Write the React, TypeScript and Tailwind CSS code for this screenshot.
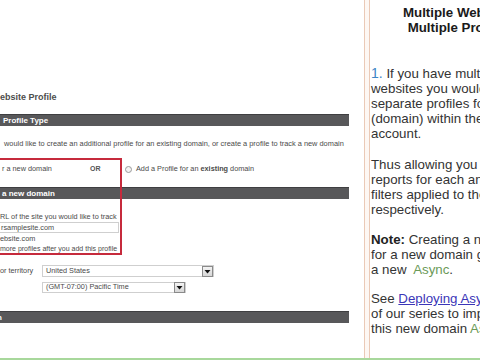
import React from "react";

function DropBtn() {
  return (
    <div className="w-[11px] h-[11px] border border-[#8a8a8a] bg-gradient-to-b from-[#f4f4f4] to-[#d6d6d6] flex items-center justify-center shrink-0">
      <svg width="7" height="5" viewBox="0 0 7 5">
        <path d="M0.5 1 L6.5 1 L3.5 4.5 Z" fill="#111" />
      </svg>
    </div>
  );
}

export default function App() {
  return (
    <div className="w-[480px] h-[360px] overflow-hidden bg-white flex flex-col font-['Liberation_Sans',Arial,sans-serif]">
      <div className="flex flex-1 min-h-0">
        {/* Left: form */}
        <div className="w-[364px] shrink-0 relative flex flex-col text-[#4a4a4a] overflow-hidden">
          <div className="mt-[91px] h-[12px] leading-[12px] text-[9px] font-bold text-[#4d4d4d] whitespace-nowrap">ebsite Profile</div>
          <div className="mt-[11px] w-[349px] h-[12px] bg-[#58585a] border-t border-[#3f3f41] text-white font-bold text-[8px] leading-[11px] pl-[3px] whitespace-nowrap">Profile Type</div>
          <div className="mt-[13px] h-[10px] leading-[10px] text-[7.4px] pl-[4px] whitespace-nowrap">would like to create an additional profile for an existing domain, or create a profile to track a new domain</div>
          <div className="mt-[15px] h-[10px] flex items-center text-[7.3px] whitespace-nowrap">
            <span className="pl-[2px] w-[90px]">r a new domain</span>
            <span className="w-[35px] text-[7px] font-bold text-[#555]">OR</span>
            <span className="w-[7px] h-[7px] rounded-full border border-[#9a9a9a] bg-[#f3f3f3]"></span>
            <span className="ml-[4px]">Add a Profile for an <b>existing</b> domain</span>
          </div>
          <div className="mt-[13px] w-[349px] h-[12px] bg-[#58585a] border-t border-[#3f3f41] text-white font-bold text-[8px] leading-[11px] pl-[2px] whitespace-nowrap">a new domain</div>
          <div className="mt-[13px] h-[10px] leading-[10px] text-[7.3px] whitespace-nowrap">RL of the site you would like to track</div>
          <div className="ml-[-2px] w-[121px] h-[11px] border border-[#cfcfcf] text-[7.3px] leading-[9px] pl-[2px] whitespace-nowrap">rsamplesite.com</div>
          <div className="mt-[1px] h-[10px] leading-[10px] text-[7.3px] whitespace-nowrap">ebsite.com</div>
          <div className="h-[10px] leading-[10px] text-[7px] whitespace-nowrap">more profiles after you add this profile</div>
          <div className="mt-[11px] h-[12px] flex items-center text-[7.3px] whitespace-nowrap">
            <span className="w-[42px]">or territory</span>
            <div className="w-[172px] h-[12px] border border-[#cfcfcf] flex items-center justify-between">
              <span className="pl-[3px]">United States</span>
              <DropBtn />
            </div>
          </div>
          <div className="mt-[5px] ml-[42px] w-[144px] h-[11px] border border-[#cfcfcf] flex items-center justify-between text-[7.3px] whitespace-nowrap">
            <span className="pl-[3px]">(GMT-07:00) Pacific Time</span>
            <DropBtn />
          </div>
          <div className="mt-[18px] w-[349px] h-[12px] bg-[#58585a] border-t border-[#3f3f41] text-white font-bold text-[8px] leading-[11px] whitespace-nowrap">
            <span className="ml-[-3px]">n</span>
          </div>
          {/* red annotation box */}
          <div className="absolute left-[-4px] top-[158px] w-[126px] h-[97px] border-2 border-[#c62a3c]"></div>
        </div>

        {/* Divider */}
        <div className="w-[6px] shrink-0 border-l border-r border-[#eac9b6] bg-[#fdf7f3]"></div>

        {/* Right: explanation */}
        <div className="flex-1 overflow-hidden pl-[1px]">
          <div className="w-[176px] text-[13.3px] leading-[15px] text-[#333] whitespace-nowrap">
            <div className="pt-[5px] text-center font-bold text-[#1a1a1a]">
              <div>Multiple Websites</div>
              <div>Multiple Profiles</div>
            </div>
            <div className="mt-[31px]">
              <div><span className="text-[#3d86c6] text-[14px]">1.</span> If you have multiple</div>
              <div>websites you would like</div>
              <div>separate profiles for each</div>
              <div>(domain) within the same</div>
              <div>account.</div>
            </div>
            <div className="mt-[16px]">
              <div>Thus allowing you to view</div>
              <div>reports for each and have</div>
              <div>filters applied to them</div>
              <div>respectively.</div>
            </div>
            <div className="mt-[15px]">
              <div><b className="text-[#222]">Note:</b> Creating a new profile</div>
              <div>for a new domain generates</div>
              <div>a new&nbsp; <span className="text-[#6b9a58]">Async</span>.</div>
            </div>
            <div className="mt-[14px]">
              <div>See <span className="text-[#3b36b8] underline">Deploying Async</span></div>
              <div>of our series to implement</div>
              <div>this new domain <span className="text-[#6b9a58]">Async</span></div>
            </div>
          </div>
        </div>
      </div>
      <div className="h-[2px] shrink-0 bg-[#a8d89c]"></div>
    </div>
  );
}
